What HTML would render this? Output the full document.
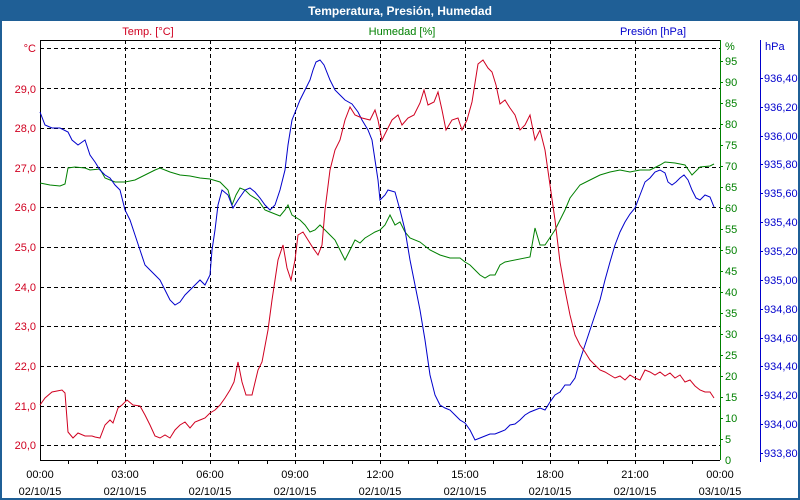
<!DOCTYPE html>
<html><head><meta charset="utf-8"><style>
html,body{margin:0;padding:0;background:#fff;}
svg{display:block;font-family:"Liberation Sans","DejaVu Sans",sans-serif;font-size:11px;}
</style></head><body>
<svg width="800" height="500" viewBox="0 0 800 500" xmlns="http://www.w3.org/2000/svg">
<rect x="0" y="0" width="800" height="500" fill="#fff"/>
<rect x="0" y="0" width="800" height="21" fill="#1f5f96"/>
<rect x="0" y="0" width="2" height="500" fill="#1f5f96"/>
<rect x="798" y="0" width="2" height="500" fill="#1f5f96"/>
<rect x="0" y="498" width="800" height="2" fill="#1f5f96"/>
<text x="400" y="15" fill="#fff" font-weight="bold" font-size="12" text-anchor="middle">Temperatura, Presión, Humedad</text>
<text x="148" y="35" fill="#d00020" text-anchor="middle">Temp. [°C]</text>
<text x="402" y="35" fill="#008000" text-anchor="middle">Humedad [%]</text>
<text x="653" y="35" fill="#0000cc" text-anchor="middle">Presión [hPa]</text>
<g stroke="#000" stroke-width="1" stroke-dasharray="4,3" fill="none">
<path d="M40 48.5H720M40 88.5H720M40 128.5H720M40 167.5H720M40 207.5H720M40 247.5H720M40 287.5H720M40 326.5H720M40 366.5H720M40 406.5H720M40 445.5H720"/>
<path d="M125.5 40V460M210.5 40V460M295.5 40V460M380.5 40V460M465.5 40V460M550.5 40V460M635.5 40V460"/>
</g>
<path d="M40.5 460V40.5H720" stroke="#000" fill="none"/>
<path d="M40 460.5H720" stroke="#000"/>
<path d="M68.5 460v4M97.5 460v4M125.5 460v4M153.5 460v4M182.5 460v4M210.5 460v4M238.5 460v4M267.5 460v4M295.5 460v4M323.5 460v4M352.5 460v4M380.5 460v4M408.5 460v4M437.5 460v4M465.5 460v4M493.5 460v4M522.5 460v4M550.5 460v4M578.5 460v4M607.5 460v4M635.5 460v4M663.5 460v4M692.5 460v4" stroke="#000"/>
<path d="M720.5 40V460" stroke="#008000"/>
<path d="M760.5 40V462" stroke="#0000cc"/>
<g fill="#d00020" text-anchor="end">
<text x="36" y="52">°C</text>
<text x="36" y="93">29,0</text><text x="36" y="132">28,0</text><text x="36" y="172">27,0</text><text x="36" y="211">26,0</text><text x="36" y="251">25,0</text><text x="36" y="291">24,0</text><text x="36" y="330">23,0</text><text x="36" y="370">22,0</text><text x="36" y="410">21,0</text><text x="36" y="449">20,0</text>
</g>
<g fill="#008000">
<text x="725" y="50">%</text>
<text x="725" y="65">95</text><text x="725" y="86">90</text><text x="725" y="107">85</text><text x="725" y="128">80</text><text x="725" y="149">75</text><text x="725" y="170">70</text><text x="725" y="191">65</text><text x="725" y="212">60</text><text x="725" y="233">55</text><text x="725" y="254">50</text><text x="725" y="275">45</text><text x="725" y="296">40</text><text x="725" y="317">35</text><text x="725" y="338">30</text><text x="725" y="359">25</text><text x="725" y="380">20</text><text x="725" y="401">15</text><text x="725" y="422">10</text><text x="725" y="443">5</text><text x="725" y="464">0</text>
</g>
<path d="M720 61.5h3M720 82.5h3M720 103.5h3M720 124.5h3M720 145.5h3M720 166.5h3M720 187.5h3M720 208.5h3M720 229.5h3M720 250.5h3M720 271.5h3M720 292.5h3M720 313.5h3M720 334.5h3M720 355.5h3M720 376.5h3M720 397.5h3M720 418.5h3M720 439.5h3" stroke="#008000"/>
<g fill="#0000cc">
<text x="765" y="50">hPa</text>
<text x="764" y="82">936,40</text><text x="764" y="111">936,20</text><text x="764" y="140">936,00</text><text x="764" y="168">935,80</text><text x="764" y="197">935,60</text><text x="764" y="226">935,40</text><text x="764" y="255">935,20</text><text x="764" y="284">935,00</text><text x="764" y="313">934,80</text><text x="764" y="342">934,60</text><text x="764" y="370">934,40</text><text x="764" y="399">934,20</text><text x="764" y="428">934,00</text><text x="764" y="457">933,80</text>
</g>
<path d="M760 78.5h3M760 107.5h3M760 136.5h3M760 164.5h3M760 193.5h3M760 222.5h3M760 251.5h3M760 280.5h3M760 309.5h3M760 338.5h3M760 366.5h3M760 395.5h3M760 424.5h3M760 453.5h3" stroke="#0000cc"/>
<g fill="#000" text-anchor="middle">
<text x="40" y="478">00:00</text><text x="40" y="495">02/10/15</text>
<text x="125" y="478">03:00</text><text x="125" y="495">02/10/15</text>
<text x="210" y="478">06:00</text><text x="210" y="495">02/10/15</text>
<text x="295" y="478">09:00</text><text x="295" y="495">02/10/15</text>
<text x="380" y="478">12:00</text><text x="380" y="495">02/10/15</text>
<text x="465" y="478">15:00</text><text x="465" y="495">02/10/15</text>
<text x="550" y="478">18:00</text><text x="550" y="495">02/10/15</text>
<text x="635" y="478">21:00</text><text x="635" y="495">02/10/15</text>
<text x="720" y="478">00:00</text><text x="720" y="495">03/10/15</text>
</g>
<polyline fill="none" stroke="#008000" stroke-width="1" points="40,183 50,185 60,186 65,184 68,168 75,167 85,168 90,170 100,169 105,178 115,182 125,182 135,180 145,175 155,170 160,168 170,172 180,175 190,176 200,178 210,179 220,182 228,190 232,205 236,195 240,188 245,190 250,195 258,200 265,210 270,212 280,216 285,210 288,205 292,215 300,220 305,225 310,232 315,230 320,225 325,230 330,235 335,240 340,250 345,260 350,250 355,240 360,243 365,238 370,235 375,232 380,230 385,225 390,215 395,225 400,222 405,232 410,238 420,242 430,250 440,255 450,258 460,258 465,262 470,265 475,270 480,275 485,278 490,275 495,275 500,265 505,262 530,257 535,228 540,245 545,245 555,230 565,210 570,198 580,185 590,180 600,175 610,172 620,170 630,172 640,170 650,170 660,165 665,162 675,163 685,165 692,175 700,167 710,166 714,164"/>
<polyline fill="none" stroke="#0000cc" stroke-width="1" points="40,112 45,125 52,128 60,128 68,132 72,140 78,145 85,140 90,155 95,162 100,170 105,175 110,178 115,185 120,190 125,210 130,220 135,235 140,250 145,265 150,270 155,275 160,280 165,290 170,300 175,305 180,302 185,295 190,290 195,285 200,280 205,285 210,275 212,250 215,230 218,205 222,190 228,195 233,208 238,200 245,190 250,188 255,192 260,198 265,205 270,210 275,205 280,190 285,170 288,145 292,120 296,110 300,100 305,90 310,80 313,70 316,62 320,60 324,65 330,80 335,90 340,95 345,100 352,104 358,112 362,120 368,130 372,140 375,160 378,180 380,200 385,195 388,190 395,192 400,210 405,230 410,260 415,285 420,310 425,340 430,375 435,395 440,405 445,408 450,410 455,415 460,420 465,423 470,430 475,440 480,438 485,436 490,434 495,434 500,432 505,430 510,425 515,424 520,420 525,415 530,412 535,410 540,408 545,410 550,402 555,395 560,392 565,385 570,385 575,378 580,360 585,345 590,330 595,315 600,300 605,280 610,262 615,245 620,232 625,222 630,214 635,208 640,195 645,182 650,178 655,172 660,170 665,173 668,182 672,185 676,182 680,178 684,175 688,180 692,190 696,198 700,200 705,195 710,197 714,207"/>
<polyline fill="none" stroke="#d00020" stroke-width="1" points="40,405 45,398 52,392 62,390 65,393 68,432 73,438 78,433 85,436 92,436 95,437 100,438 105,425 110,420 113,423 118,408 122,405 127,400 133,405 140,406 145,415 150,425 155,436 160,438 165,435 170,438 175,430 180,425 185,422 190,428 195,422 200,420 205,418 210,413 215,410 220,405 225,398 230,390 234,382 238,362 242,382 246,395 252,395 258,370 262,362 268,330 272,300 278,260 283,245 287,268 291,280 295,260 298,235 303,232 308,240 313,248 318,255 322,245 325,210 330,170 335,150 340,140 345,120 350,107 355,115 362,118 370,120 375,110 378,120 382,140 387,130 392,120 398,115 402,125 408,118 414,115 420,103 424,90 428,105 434,102 438,92 442,110 446,130 452,120 458,118 462,130 467,120 472,102 478,64 483,60 488,68 492,72 496,85 500,104 505,100 510,108 515,115 520,130 525,125 530,115 535,140 540,130 545,150 550,185 555,220 560,262 565,290 570,315 575,335 580,345 585,352 590,360 595,365 600,370 605,372 610,375 615,378 620,376 625,380 630,375 635,378 640,380 645,370 650,372 655,375 660,372 665,376 670,373 675,378 680,375 685,382 690,380 695,386 700,390 705,392 710,392 714,398"/>
</svg>
</body></html>
